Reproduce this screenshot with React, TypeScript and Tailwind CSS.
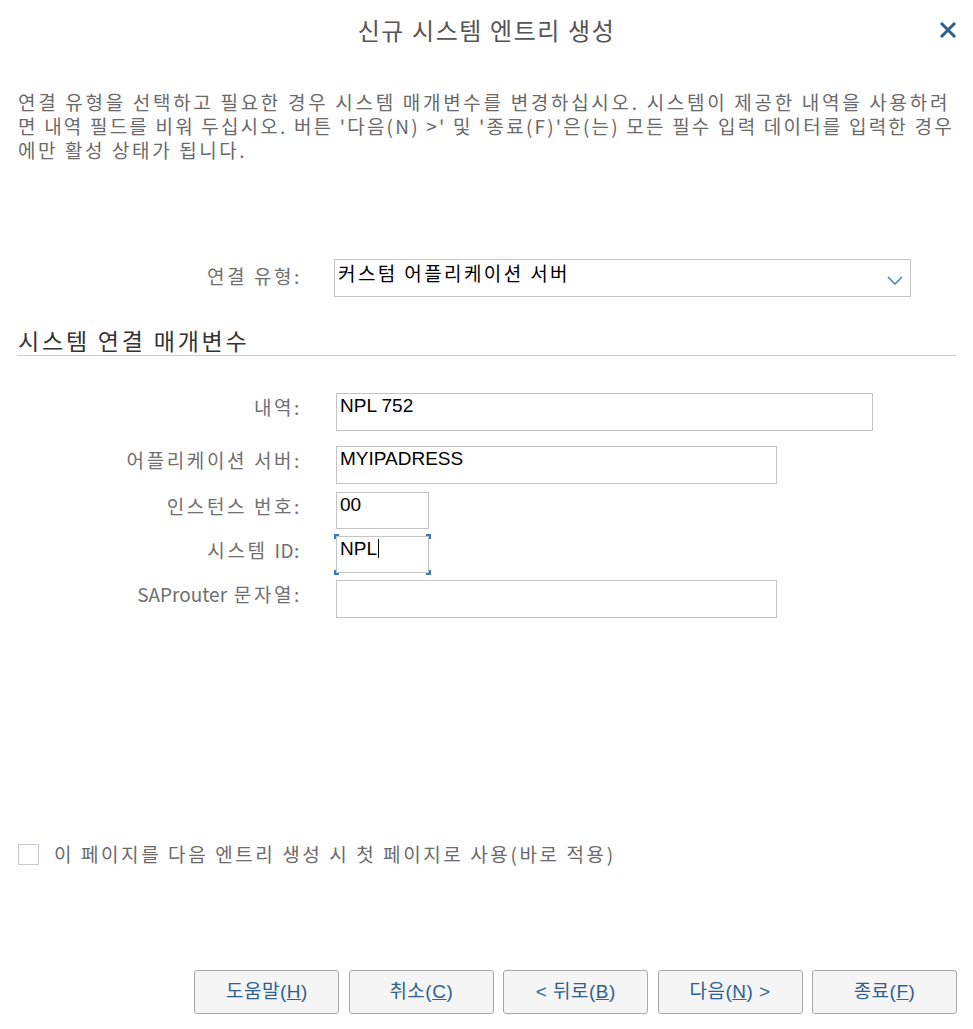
import React from "react";

const font = "font-['Noto_Sans_CJK_KR','Noto_Sans',sans-serif]";

function Field({
  label,
  value,
  width,
  height,
  top,
  focused,
}: {
  label: React.ReactNode;
  value?: string;
  width: string;
  height: string;
  top: string;
  focused?: boolean;
}) {
  return (
    <div className={`flex items-start ${top}`}>
      <div className="w-[302px] pt-[2px] text-right text-[19px] leading-[24px] tracking-[2.6px] text-[#707070]">
        {label}
      </div>
      <div className={`relative ml-[34px] ${width} ${height} border border-[#c4c4c4] bg-white`}>
        <div className="px-[3px] font-['Liberation_Sans',sans-serif] text-[19px] leading-[24px] text-black">
          {value}
          {focused && <span className="ml-[1px] inline-block h-[19px] w-[1px] bg-black align-[-3px]" />}
        </div>
        {focused && (
          <>
            <span className="absolute -left-[3px] -top-[3px] h-[5px] w-[5px] border-l-2 border-t-2 border-[#3b78b6]" />
            <span className="absolute -right-[3px] -top-[3px] h-[5px] w-[5px] border-r-2 border-t-2 border-[#3b78b6]" />
            <span className="absolute -bottom-[3px] -left-[3px] h-[5px] w-[5px] border-b-2 border-l-2 border-[#3b78b6]" />
            <span className="absolute -bottom-[3px] -right-[3px] h-[5px] w-[5px] border-b-2 border-r-2 border-[#3b78b6]" />
          </>
        )}
      </div>
    </div>
  );
}

function Btn({ children }: { children: React.ReactNode }) {
  return (
    <button className="flex h-[44px] w-[145px] items-center justify-center rounded-[3px] border border-[#a9a9a9] bg-[#f5f5f5] font-['Liberation_Sans','Noto_Sans_CJK_KR',sans-serif] text-[19px] tracking-[0.5px] text-[#2f6190]">
      {children}
    </button>
  );
}

export default function App() {
  return (
    <div className={`flex h-[1029px] w-[973px] flex-col bg-white ${font}`}>
      {/* header */}
      <div className="relative flex h-[60px] items-center justify-center">
        <div className="text-[24px] tracking-[1.6px] text-[#555555]">신규 시스템 엔트리 생성</div>
        <svg className="absolute right-[17px] top-[22px]" width="16" height="16" viewBox="0 0 16 16">
          <path d="M2 2 L14 14 M14 2 L2 14" stroke="#2d6090" strokeWidth="3" strokeLinecap="square" />
        </svg>
      </div>

      <div className="mt-[30px] flex flex-col px-[18px] text-[19px] leading-[24px] whitespace-nowrap text-[#6a6a6a]">
        <span className="tracking-[2.7px]">
          연결 유형을 선택하고 필요한 경우 시스템 매개변수를 변경하십시오. 시스템이 제공한 내역을 사용하려
        </span>
        <span className="tracking-[2.2px]">
          면 내역 필드를 비워 두십시오. 버튼 '다음(N) &gt;' 및 '종료(F)'은(는) 모든 필수 입력 데이터를 입력한 경우
        </span>
        <span className="tracking-[2.6px]">에만 활성 상태가 됩니다.</span>
      </div>

      {/* connection type */}
      <div className="mt-[97px] flex items-start">
        <div className="w-[302px] pt-[5px] text-right text-[19px] leading-[24px] tracking-[2.6px] text-[#707070]">
          연결 유형:
        </div>
        <div className="ml-[32px] flex h-[38px] w-[577px] items-start justify-between border border-[#c4c4c4] bg-white">
          <span className="pl-[3px] pt-[1px] text-[19px] leading-[24px] tracking-[2.4px] text-black">
            커스텀 어플리케이션 서버
          </span>
          <svg className="mr-[7px] mt-[16px]" width="16" height="9" viewBox="0 0 16 9">
            <path d="M1 1 L8 8 L15 1" stroke="#3a78b5" strokeWidth="1.4" fill="none" />
          </svg>
        </div>
      </div>

      {/* section */}
      <div className="mx-[17px] mt-[28px] h-[31px] border-b border-[#cccccc] pl-[1px] text-[23px] leading-[30px] tracking-[2.8px] text-[#333333]">
        시스템 연결 매개변수
      </div>

      <Field label="내역:" value="NPL 752" width="w-[537px]" height="h-[38px]" top="mt-[37px]" />
      <Field label="어플리케이션 서버:" value="MYIPADRESS" width="w-[441px]" height="h-[38px]" top="mt-[15px]" />
      <Field label="인스턴스 번호:" value="00" width="w-[93px]" height="h-[37px]" top="mt-[8px]" />
      <Field
        label={
          <>
            시스템 <span className="tracking-[0.5px]">ID</span>:
          </>
        }
        value="NPL"
        width="w-[93px]"
        height="h-[37px]"
        top="mt-[7px]"
        focused
      />
      <Field
        label={
          <>
            <span className="tracking-[0px]">SAProuter</span> 문자열:
          </>
        }
        width="w-[441px]"
        height="h-[38px]"
        top="mt-[7px]"
      />

      {/* checkbox */}
      <div className="mt-[224px] flex items-center pl-[18px]">
        <span className="h-[21px] w-[21px] border border-[#c9c9d2] bg-white" />
        <span className="ml-[15px] text-[19px] leading-[24px] tracking-[2.6px] text-[#6a6a6a]">
          이 페이지를 다음 엔트리 생성 시 첫 페이지로 사용(바로 적용)
        </span>
      </div>

      {/* buttons */}
      <div className="mt-[104px] flex justify-end gap-[9.4px] pr-[16px]">
        <Btn>
          도움말(<span className="underline">H</span>)
        </Btn>
        <Btn>
          취소(<span className="underline">C</span>)
        </Btn>
        <Btn>
          &lt; 뒤로(<span className="underline">B</span>)
        </Btn>
        <Btn>
          다음(<span className="underline">N</span>) &gt;
        </Btn>
        <Btn>
          종료(<span className="underline">F</span>)
        </Btn>
      </div>
    </div>
  );
}
